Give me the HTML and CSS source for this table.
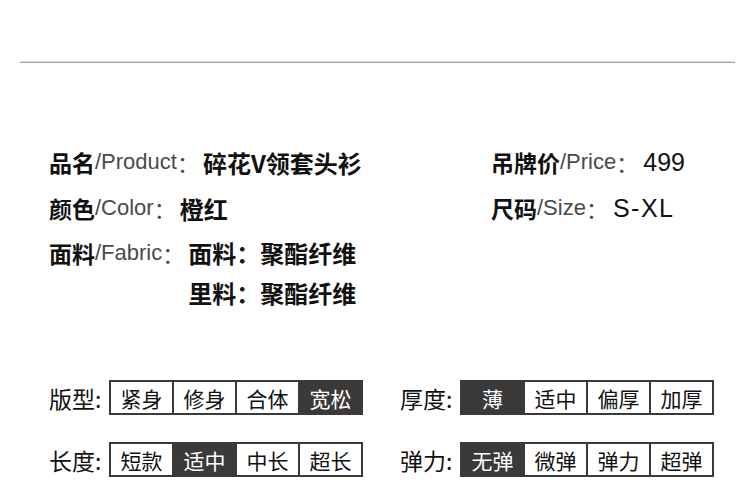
FILE: index.html
```html
<!DOCTYPE html>
<html lang="zh-CN">
<head>
<meta charset="utf-8">
<title>商品信息</title>
<link rel="stylesheet" href="styles.css">
</head>
<body>
<div class="rule"></div>
<section class="info">
  <div class="col col-left">
    <div class="row"><span class="k">品名</span><span class="en">/Product</span><span class="colon">：</span><span class="v">碎花V领套头衫</span></div>
    <div class="row"><span class="k">颜色</span><span class="en">/Color</span><span class="colon">：</span><span class="v">橙红</span></div>
    <div class="row row-fabric">
      <span class="k">面料</span><span class="en">/Fabric</span><span class="colon">：</span>
      <div class="v vals">
        <div>面料：聚酯纤维</div>
        <div>里料：聚酯纤维</div>
      </div>
    </div>
  </div>
  <div class="col col-right">
    <div class="row"><span class="k">吊牌价</span><span class="en">/Price</span><span class="colon">：</span><span class="num">499</span></div>
    <div class="row"><span class="k">尺码</span><span class="en">/Size</span><span class="colon">：</span><span class="num size">S-XL</span></div>
  </div>
</section>
<section class="options">
  <div class="opt-row">
    <div class="group group-left">
      <span class="label">版型:</span>
      <div class="boxes"><span class="box">紧身</span><span class="box">修身</span><span class="box">合体</span><span class="box on">宽松</span></div>
    </div>
    <div class="group group-right">
      <span class="label">厚度:</span>
      <div class="boxes"><span class="box on">薄</span><span class="box">适中</span><span class="box">偏厚</span><span class="box">加厚</span></div>
    </div>
  </div>
  <div class="opt-row">
    <div class="group group-left">
      <span class="label">长度:</span>
      <div class="boxes"><span class="box">短款</span><span class="box on">适中</span><span class="box">中长</span><span class="box">超长</span></div>
    </div>
    <div class="group group-right">
      <span class="label">弹力:</span>
      <div class="boxes"><span class="box on">无弹</span><span class="box">微弹</span><span class="box">弹力</span><span class="box">超弹</span></div>
    </div>
  </div>
</section>
</body>
</html>
```
FILE: styles.css
```css
html, body {
  margin: 0;
  padding: 0;
  background: #fff;
}
body {
  width: 750px;
  height: 486px;
  overflow: hidden;
  font-family: "Liberation Sans", "Noto Sans CJK SC", sans-serif;
  color: #111;
}
.rule {
  margin: 61px 0 0 20px;
  width: 715px;
  height: 0;
  border-top: 1px solid #dcdcdc;
  border-bottom: 1px solid #a4a4a4;
}
.info {
  display: flex;
  margin-top: 76px;
  padding-left: 49px;
}
.col-left {
  width: 441px;
}
.col-right {
  padding-left: 1px;
}
.row {
  display: flex;
  align-items: center;
  height: 46px;
  white-space: nowrap;
}
.k {
  font-family: "Noto Sans CJK SC", sans-serif;
  font-weight: 700;
  font-size: 23px;
  color: #111;
}
.en {
  font-family: "Liberation Sans", sans-serif;
  font-size: 22px;
  color: #4a4a4a;
}
.colon {
  font-family: "Noto Sans CJK SC", sans-serif;
  font-size: 22px;
  color: #4a4a4a;
}
.v {
  font-family: "Noto Sans CJK SC", sans-serif;
  font-weight: 700;
  font-size: 24px;
  margin-left: 4px;
  color: #111;
}
.num {
  font-family: "Liberation Sans", sans-serif;
  font-size: 25px;
  margin-left: 5px;
  color: #111;
}
.size {
  letter-spacing: 1.5px;
}
.row-fabric {
  align-items: flex-start;
  height: auto;
  margin-top: 2px;
  line-height: 40px;
}
.vals {
  line-height: 40px;
}
.options {
  margin-top: 67px;
  display: flex;
  flex-direction: column;
  gap: 27px;
}
.opt-row {
  display: flex;
}
.group {
  display: flex;
  align-items: center;
  flex-shrink: 0;
  white-space: nowrap;
}
.group-left {
  box-sizing: border-box;
  width: 400px;
  padding-left: 49px;
}
.label {
  flex-shrink: 0;
  font-family: "Noto Sans CJK SC", sans-serif;
  font-size: 23px;
  color: #111;
  width: 60px;
}
.boxes {
  display: flex;
  flex-shrink: 0;
  border: 2px solid #3a3a3a;
  height: 31px;
}
.box {
  width: 61px;
  flex-shrink: 0;
  display: flex;
  align-items: center;
  justify-content: center;
  font-family: "Noto Sans CJK SC", sans-serif;
  font-size: 21px;
  color: #111;
  border-right: 2px solid #3a3a3a;
}
.box:last-child {
  border-right: none;
}
.box.on {
  background: #3a3a3a;
  color: #fff;
}
```
